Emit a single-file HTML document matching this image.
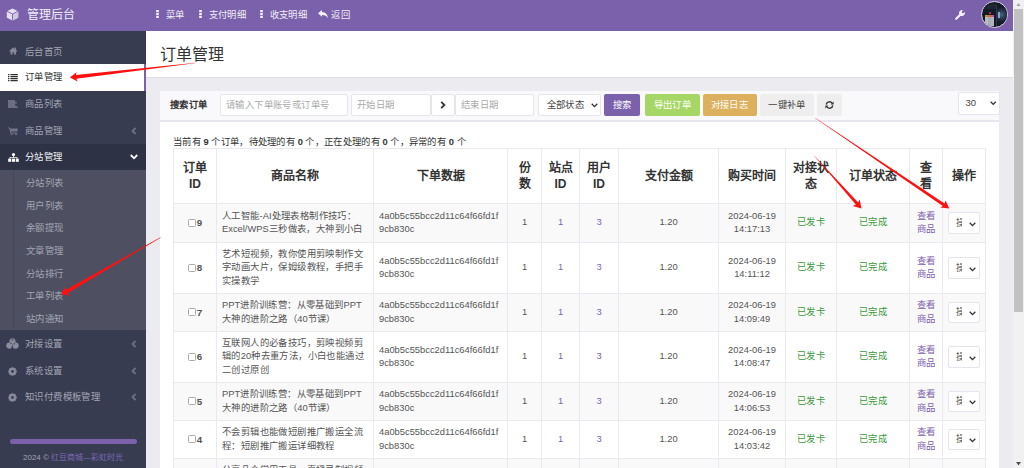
<!DOCTYPE html><html lang="zh-CN"><head><meta charset="utf-8"><style>
*{box-sizing:border-box;margin:0;padding:0}
html,body{width:1024px;height:468px;overflow:hidden;background:#ecebf0;font-family:"Liberation Sans",sans-serif;font-size:9.35px;color:#333}
i{font-style:normal;letter-spacing:.4px}
.abs{position:absolute}
#hdr{position:absolute;left:0;top:0;width:1013px;height:31px;background:#7b61ab;color:#fff}
#hdr .brand{position:absolute;left:27px;top:6.5px;font-size:12px;line-height:16px;color:#f1eef6}
#hdr .brand i{letter-spacing:0}
#hdr .nav{position:absolute;top:8.5px;line-height:13px;color:#f1eef6;white-space:nowrap}
#sb{position:absolute;left:0;top:31px;width:146px;height:437px;background:#373c50}
.mi{position:absolute;left:0;width:146px;height:27px;color:#a3a5b2;line-height:27px;white-space:nowrap}
.mi .t{position:absolute;left:25px;top:0}
.mi svg{position:absolute}
.mi.active{background:#fff;color:#333}
.sub{position:absolute;left:0;top:139px;width:146px;height:160px;background:#4e5061}
.sub .vl{position:absolute;left:13px;top:0;width:1px;height:160px;background:#444759}
.si{position:absolute;left:26px;color:#a3a5b2;line-height:13px}
#ct{position:absolute;left:146px;top:31px;width:867px;height:437px;background:#ecebf0}
#ch{position:absolute;left:0;top:0;width:867px;height:47px;background:#fff;border-bottom:1px solid #dfdbe8}
#ch h1{position:absolute;left:14px;top:14px;font-size:16px;font-weight:normal;line-height:20px;color:#333}
#ch h1 i{letter-spacing:0}
#panel{position:absolute;left:14px;top:60px;width:839px;height:400px;background:#fff}
#ph{position:absolute;left:0;top:0;width:839px;height:30.5px;background:#f9f8fb;border-bottom:2px solid #e8e6ee}
.inp{position:absolute;top:3px;height:22px;background:#fff;border:1px solid #e6e5ec;border-radius:2px;color:#aaa;line-height:20px;padding-left:5px;white-space:nowrap}
.btn{position:absolute;top:3px;height:22px;border-radius:2px;color:#fff;line-height:22px;text-align:center;white-space:nowrap}
#tbl{position:absolute;left:13px;top:57px;width:812px;border-collapse:collapse;table-layout:fixed}
#tbl td,#tbl th{border:1px solid #ebe9f0;text-align:center;vertical-align:middle}
#tbl th{font-size:12px;line-height:16.5px;font-weight:bold;color:#333;height:55px;padding:0 1px}
#tbl th i{letter-spacing:0}
#tbl td{font-size:9.35px;line-height:13.5px;color:#555;padding:0 5px}
#tbl td.l{text-align:left}
.info i{letter-spacing:.3px}
#tbl td.hx{word-break:break-all}
#tbl td.g{color:#3c9a3c}
#tbl td.p{color:#7b61ab}
#tbl tr.s td{background:#f9f9f9}
.cb{display:inline-block;width:8px;height:8px;border:1px solid #aaa;border-radius:1.5px;vertical-align:-1px;background:#fff;margin-right:1px}
#tbl td b{font-size:9.8px;position:relative;top:0.5px}
.ops{margin-left:-1px;display:inline-block;width:32px;height:21.5px;border:1px solid #e6e4ee;border-radius:2px;background:#fff;position:relative;vertical-align:middle}
</style></head><body>
<div id="hdr">
<svg class="abs" style="left:6px;top:8px" width="13" height="13" viewBox="0 0 13 13"><path d="M6.5 0.6L12.2 3.2V9.8L6.5 12.4L0.8 9.8V3.2Z" fill="#e4def0"/><path d="M6.5 6L12.2 3.2V9.8L6.5 12.4Z" fill="#cfc6e2"/><path d="M0.8 3.2L6.5 6L12.2 3.2M6.5 6V12.4" stroke="#7b61ab" stroke-width="0.9" fill="none"/></svg>
<div class="brand"><i>管理后台</i></div>
<svg class="abs" style="left:156px;top:10px" width="3" height="8" viewBox="0 0 3 8"><rect x="0.2" y="0" width="2.6" height="2.2" fill="#f4f0fa"/><rect x="0.2" y="2.9" width="2.6" height="2.2" fill="#f4f0fa"/><rect x="0.2" y="5.8" width="2.6" height="2.2" fill="#f4f0fa"/></svg><div class="nav" style="left:165.5px"><i>菜单</i></div>
<svg class="abs" style="left:198.8px;top:10px" width="3" height="8" viewBox="0 0 3 8"><rect x="0.2" y="0" width="2.6" height="2.2" fill="#f4f0fa"/><rect x="0.2" y="2.9" width="2.6" height="2.2" fill="#f4f0fa"/><rect x="0.2" y="5.8" width="2.6" height="2.2" fill="#f4f0fa"/></svg><div class="nav" style="left:208.7px"><i>支付明细</i></div>
<svg class="abs" style="left:259.9px;top:10px" width="3" height="8" viewBox="0 0 3 8"><rect x="0.2" y="0" width="2.6" height="2.2" fill="#f4f0fa"/><rect x="0.2" y="2.9" width="2.6" height="2.2" fill="#f4f0fa"/><rect x="0.2" y="5.8" width="2.6" height="2.2" fill="#f4f0fa"/></svg><div class="nav" style="left:269.7px"><i>收支明细</i></div>
<svg class="abs" style="left:318px;top:10px" width="10" height="8.5" viewBox="0 0 10 8.5"><path d="M0 3.3L4 0V2C7.5 2.2 9.6 4.2 9.8 8.3C8.8 6.1 7 5 4 5V6.8Z" fill="#f4f0fa"/></svg><div class="nav" style="left:331.2px"><i>返回</i></div>
<svg class="abs" style="left:955px;top:9px" width="11" height="11" viewBox="0 0 11 11"><path d="M1.2 9.8L5.5 5.5" stroke="#f4f0fa" stroke-width="2.2" stroke-linecap="round"/><path d="M8 1.2A3 3 0 1 0 9.8 3L8.3 4.2L6.9 4.1L6.8 2.7Z" fill="#f4f0fa"/></svg>
<div class="abs" style="left:981px;top:1px;width:27px;height:27px;border-radius:50%;border:1px solid #e2daf0;background:#131b27;overflow:hidden"><div class="abs" style="left:2px;top:2px;width:12px;height:5px;background:#1e2633"></div><div class="abs" style="left:3px;top:13.5px;width:2.6px;height:10px;background:#b8bcc4"></div><div class="abs" style="left:6px;top:13.5px;width:2.6px;height:10px;background:#a9adb6"></div><div class="abs" style="left:9px;top:14px;width:2.6px;height:9.5px;background:#b2b5bf"></div><div class="abs" style="left:3px;top:12.5px;width:2.6px;height:2px;background:#c88a3a"></div><div class="abs" style="left:6px;top:12.5px;width:2.6px;height:2px;background:#d0702e"></div><div class="abs" style="left:9px;top:13px;width:2.6px;height:2px;background:#b858b0"></div><div class="abs" style="left:6.5px;top:10px;width:2px;height:2px;background:#b83040"></div><div class="abs" style="left:13.5px;top:3px;width:1px;height:21px;background:#2c3848"></div><div class="abs" style="left:15px;top:5px;width:10px;height:17px;background:radial-gradient(circle at 45% 45%,#4a6480 0,#2a3a50 35%,#141c28 70%)"></div><div class="abs" style="left:16px;top:10px;width:2px;height:6px;background:#8aa4c0"></div></div>
</div>
<div id="sb">
<div class="mi" style="top:7.5px"><svg class="abs" style="left:8.5px;top:8.5px" width="8.6" height="7.6" viewBox="0 0 10 8" preserveAspectRatio="none"><path d="M5 0.3L0.3 4.3L1.2 5.1L1.8 4.6V7.8H4.2V5.6H5.8V7.8H8.2V4.6L8.8 5.1L9.7 4.3L8.2 3V0.6H7V2Z" fill="#868897"/></svg><span class="t"><i>后台首页</i></span></div>
<div class="mi active" style="top:33px"><svg class="abs" style="left:8px;top:10px" width="10" height="8" viewBox="0 0 10 8"><g fill="#333"><rect x="0" y="0" width="1.4" height="1.25"/><rect x="2.4" y="0" width="7.4" height="1.25"/><rect x="0" y="2" width="1.4" height="1.25"/><rect x="2.4" y="2" width="7.4" height="1.25"/><rect x="0" y="4" width="1.4" height="1.25"/><rect x="2.4" y="4" width="7.4" height="1.25"/><rect x="0" y="6" width="1.4" height="1.25"/><rect x="2.4" y="6" width="7.4" height="1.25"/></g></svg><span class="t"><i>订单管理</i></span><div class="abs" style="left:144px;top:0;width:2px;height:27px;background:#7b61ab"></div></div>
<div class="mi" style="top:60px"><svg class="abs" style="left:8px;top:8.7px" width="10" height="8.3" viewBox="0 0 10 8.3"><path d="M0 0H7V1.8H8.8V3.6H7V5.6H8.3V6.6H10V8.3H0Z" fill="#6c6e80"/></svg><span class="t"><i>商品列表</i></span></div>
<div class="mi" style="top:87px"><svg class="abs" style="left:8px;top:8.5px" width="10" height="8.5" viewBox="0 0 10 8.5"><path d="M0.2 0.2L2 0.9L2.4 1.5H9.7L9.5 4.6H3L3.2 5.6H9.2V6.6H2.5L1.3 1.6L0 1.1Z" fill="#73758a"/><rect x="2.6" y="6.6" width="2" height="1.6" fill="#73758a"/><rect x="7.1" y="6.6" width="2" height="1.6" fill="#73758a"/></svg><span class="t"><i>商品管理</i></span><svg class="abs" style="left:131px;top:8.7px" width="6" height="8" viewBox="0 0 6 8"><path d="M4.6 1L1.5 4L4.6 7" stroke="#6e7080" stroke-width="1.8" fill="none"/></svg></div>
<div class="mi" style="top:113px;background:#2d3245;color:#f4f4f6;height:26px"><svg class="abs" style="left:7.5px;top:9px" width="11" height="9" viewBox="0 0 11 9"><circle cx="5.5" cy="1.6" r="1.6" fill="#fff"/><path d="M5.5 2.8V4.6M1.8 6V4.6H9.2V6" stroke="#fff" stroke-width="0.8" fill="none"/><rect x="0.2" y="5.7" width="3" height="3.1" fill="#fff"/><rect x="4" y="5.7" width="3" height="3.1" fill="#fff"/><rect x="7.8" y="5.7" width="3" height="3.1" fill="#fff"/></svg><span class="t"><i>分站管理</i></span><svg class="abs" style="left:129.5px;top:10px" width="8" height="6" viewBox="0 0 8 6"><path d="M0.8 1L4 4.3L7.2 1" stroke="#fff" stroke-width="1.8" fill="none"/></svg></div>
<div class="sub"><div class="vl"></div>
<div class="si" style="top:7px"><i>分站列表</i></div>
<div class="si" style="top:29.7px"><i>用户列表</i></div>
<div class="si" style="top:52.3px"><i>余额提现</i></div>
<div class="si" style="top:75px"><i>文章管理</i></div>
<div class="si" style="top:97.7px"><i>分站排行</i></div>
<div class="si" style="top:120.3px"><i>工单列表</i></div>
<div class="si" style="top:143px"><i>站内通知</i></div>
</div>
<div class="mi" style="top:300px"><svg class="abs" style="left:6px;top:7px" width="13" height="11" viewBox="0 0 13 11"><circle cx="6.5" cy="3.2" r="3" fill="#8a8c9c"/><circle cx="3.4" cy="7.6" r="3.1" fill="#8a8c9c"/><circle cx="9.6" cy="7.6" r="3.1" fill="#8a8c9c"/><ellipse cx="6.5" cy="1.8" rx="1.2" ry="0.5" fill="#373c50"/><circle cx="5" cy="5.2" r="0.7" fill="#373c50"/><circle cx="8.2" cy="5.8" r="0.7" fill="#373c50"/><circle cx="6.3" cy="8.4" r="0.7" fill="#373c50"/></svg><span class="t"><i>对接设置</i></span><svg class="abs" style="left:131px;top:8.7px" width="6" height="8" viewBox="0 0 6 8"><path d="M4.6 1L1.5 4L4.6 7" stroke="#6e7080" stroke-width="1.8" fill="none"/></svg></div>
<div class="mi" style="top:327px"><svg class="abs" style="left:8.4px;top:9px" width="9" height="9" viewBox="0 0 9 9"><path d="M8.79 3.54 L8.79 5.46 L7.29 5.85 L7.43 5.52 L8.22 6.86 L6.86 8.22 L5.52 7.43 L5.85 7.29 L5.46 8.79 L3.54 8.79 L3.15 7.29 L3.48 7.43 L2.14 8.22 L0.78 6.86 L1.57 5.52 L1.71 5.85 L0.21 5.46 L0.21 3.54 L1.71 3.15 L1.57 3.48 L0.78 2.14 L2.14 0.78 L3.48 1.57 L3.15 1.71 L3.54 0.21 L5.46 0.21 L5.85 1.71 L5.52 1.57 L6.86 0.78 L8.22 2.14 L7.43 3.48 L7.29 3.15Z M4.5 3.1A1.4 1.4 0 1 0 4.5 5.9A1.4 1.4 0 1 0 4.5 3.1Z" fill="#8a8c9c" fill-rule="evenodd"/></svg><span class="t"><i>系统设置</i></span><svg class="abs" style="left:131px;top:8.7px" width="6" height="8" viewBox="0 0 6 8"><path d="M4.6 1L1.5 4L4.6 7" stroke="#6e7080" stroke-width="1.8" fill="none"/></svg></div>
<div class="mi" style="top:353px"><svg class="abs" style="left:8.4px;top:9px" width="9" height="9" viewBox="0 0 9 9"><path d="M8.79 3.54 L8.79 5.46 L7.29 5.85 L7.43 5.52 L8.22 6.86 L6.86 8.22 L5.52 7.43 L5.85 7.29 L5.46 8.79 L3.54 8.79 L3.15 7.29 L3.48 7.43 L2.14 8.22 L0.78 6.86 L1.57 5.52 L1.71 5.85 L0.21 5.46 L0.21 3.54 L1.71 3.15 L1.57 3.48 L0.78 2.14 L2.14 0.78 L3.48 1.57 L3.15 1.71 L3.54 0.21 L5.46 0.21 L5.85 1.71 L5.52 1.57 L6.86 0.78 L8.22 2.14 L7.43 3.48 L7.29 3.15Z M4.5 3.1A1.4 1.4 0 1 0 4.5 5.9A1.4 1.4 0 1 0 4.5 3.1Z" fill="#8a8c9c" fill-rule="evenodd"/></svg><span class="t"><i>知识付费模板管理</i></span><svg class="abs" style="left:131px;top:8.7px" width="6" height="8" viewBox="0 0 6 8"><path d="M4.6 1L1.5 4L4.6 7" stroke="#6e7080" stroke-width="1.8" fill="none"/></svg></div>
<div class="abs" style="left:10px;top:407.5px;width:127px;height:5px;border-radius:3px;background:#7b61ab"></div>
<div class="abs" style="left:23px;top:420px;color:#a3a5b2;line-height:13px;font-size:8px;white-space:nowrap">2024 © <span style="color:#7f68b8">红豆商城—彩虹时光</span></div>
</div>
<div id="ct"><div id="ch"><h1><i>订单管理</i></h1></div><div id="panel"><div id="ph">
<div class="abs" style="left:10px;top:8px;font-weight:bold;color:#333;line-height:13px"><i>搜索订单</i></div>
<div class="inp" style="left:60px;width:128px"><i>请输入下单账号或订单号</i></div>
<div class="inp" style="left:191px;width:80px"><i>开始日期</i></div>
<div class="inp" style="left:271px;width:24px"><svg class="abs" style="left:8px;top:6px" width="6" height="8" viewBox="0 0 6 8"><path d="M1.2 0.8L4.4 4L1.2 7.2" stroke="#333" stroke-width="1.8" fill="none"/></svg></div>
<div class="inp" style="left:295px;width:79px"><i>结束日期</i></div>
<div class="inp" style="left:377.7px;width:63px;color:#444;padding-left:8px"><i>全部状态</i><svg class="abs" style="left:52.5px;top:8px" width="7" height="5" viewBox="0 0 7 5"><path d="M0.7 0.8L3.5 3.6L6.3 0.8" stroke="#333" stroke-width="1.3" fill="none"/></svg></div>
<div class="btn" style="left:444px;width:36px;background:#7b61ab"><i>搜索</i></div>
<div class="btn" style="left:485px;width:55px;background:#a6d766"><i>导出订单</i></div>
<div class="btn" style="left:542.5px;width:54px;background:#dcb05c"><i>对接日志</i></div>
<div class="btn" style="left:600px;width:54px;background:#eeeeee;color:#444"><i>一键补单</i></div>
<div class="btn" style="left:657px;width:25px;background:#eeeeee"><svg class="abs" style="left:8px;top:7px" width="9" height="8" viewBox="0 0 9 8"><path d="M1.2 3.5A3.3 3.3 0 0 1 7.2 2.3M7.8 4.5A3.3 3.3 0 0 1 1.8 5.7" stroke="#333" stroke-width="1.4" fill="none"/><path d="M8.6 0.4V3.4H5.6Z M0.4 7.6V4.6H3.4Z" fill="#333"/></svg></div>
<div class="inp" style="left:797.5px;top:1.3px;width:42px;height:22.3px;color:#444;padding-left:7px;font-size:9.6px">30<svg class="abs" style="left:31.5px;top:8px" width="6.5" height="4.5" viewBox="0 0 6.5 4.5"><path d="M0.6 0.7L3.25 3.3L5.9 0.7" stroke="#3a3f50" stroke-width="1.3" fill="none"/></svg></div>
</div>
<div class="abs info" style="left:13px;top:44.5px;line-height:13px;white-space:nowrap"><i>当前有</i> <b>9</b> <i>个订单，待处理的有</i> <b>0</b> <i>个，正在处理的有</i> <b>0</b> <i>个，异常的有</i> <b>0</b> <i>个</i></div>
<table id="tbl"><colgroup><col style="width:43px"><col style="width:157px"><col style="width:134px"><col style="width:34px"><col style="width:38px"><col style="width:39px"><col style="width:100px"><col style="width:67px"><col style="width:51px"><col style="width:73px"><col style="width:33px"><col style="width:43px"></colgroup>
<tr><th><i>订单</i><br>ID</th><th><i>商品名称</i></th><th><i>下单数据</i></th><th><i>份</i><br><i>数</i></th><th><i>站点</i><br>ID</th><th><i>用户</i><br>ID</th><th><i>支付金额</i></th><th><i>购买时间</i></th><th><i>对接状</i><br><i>态</i></th><th><i>订单状态</i></th><th><i>查</i><br><i>看</i></th><th><i>操作</i></th></tr>
<tr class="s" style="height:39px"><td><span class="cb"></span><b>9</b></td><td class="l"><i>人工智能</i>-AI<i>处理表格制作技巧：</i>Excel/WPS<i>三秒做表，大神到小白</i></td><td class="l hx">4a0b5c55bcc2d11c64f66fd1f9cb830c</td><td>1</td><td class="p">1</td><td class="p">3</td><td>1.20</td><td>2024-06-19<br>14:17:13</td><td class="g"><i>已发卡</i></td><td class="g"><i>已完成</i></td><td class="p"><i>查看</i><br><i>商品</i></td><td><span class="ops"><span class="abs" style="left:7px;top:3.5px;width:6px;overflow:hidden;line-height:13px;color:#555;white-space:nowrap"><i>操作</i></span><svg class="abs" style="left:20.5px;top:8.3px" width="7" height="5" viewBox="0 0 7 5"><path d="M0.7 0.8L3.5 3.6L6.3 0.8" stroke="#333" stroke-width="1.3" fill="none"/></svg></span></td></tr>
<tr class="" style="height:51px"><td><span class="cb"></span><b>8</b></td><td class="l"><i>艺术短视频，教你使用剪映制作文字动画大片，保姆级教程，手把手实操教学</i></td><td class="l hx">4a0b5c55bcc2d11c64f66fd1f9cb830c</td><td>1</td><td class="p">1</td><td class="p">3</td><td>1.20</td><td>2024-06-19<br>14:11:12</td><td class="g"><i>已发卡</i></td><td class="g"><i>已完成</i></td><td class="p"><i>查看</i><br><i>商品</i></td><td><span class="ops"><span class="abs" style="left:7px;top:3.5px;width:6px;overflow:hidden;line-height:13px;color:#555;white-space:nowrap"><i>操作</i></span><svg class="abs" style="left:20.5px;top:8.3px" width="7" height="5" viewBox="0 0 7 5"><path d="M0.7 0.8L3.5 3.6L6.3 0.8" stroke="#333" stroke-width="1.3" fill="none"/></svg></span></td></tr>
<tr class="s" style="height:38px"><td><span class="cb"></span><b>7</b></td><td class="l">PPT<i>进阶训练营：从零基础到</i>PPT<i>大神的进阶之路（</i>40<i>节课）</i></td><td class="l hx">4a0b5c55bcc2d11c64f66fd1f9cb830c</td><td>1</td><td class="p">1</td><td class="p">3</td><td>1.20</td><td>2024-06-19<br>14:09:49</td><td class="g"><i>已发卡</i></td><td class="g"><i>已完成</i></td><td class="p"><i>查看</i><br><i>商品</i></td><td><span class="ops"><span class="abs" style="left:7px;top:3.5px;width:6px;overflow:hidden;line-height:13px;color:#555;white-space:nowrap"><i>操作</i></span><svg class="abs" style="left:20.5px;top:8.3px" width="7" height="5" viewBox="0 0 7 5"><path d="M0.7 0.8L3.5 3.6L6.3 0.8" stroke="#333" stroke-width="1.3" fill="none"/></svg></span></td></tr>
<tr class="" style="height:51px"><td><span class="cb"></span><b>6</b></td><td class="l"><i>互联网人的必备技巧，剪映视频剪辑的</i>20<i>种去重方法，小白也能通过二创过原创</i></td><td class="l hx">4a0b5c55bcc2d11c64f66fd1f9cb830c</td><td>1</td><td class="p">1</td><td class="p">3</td><td>1.20</td><td>2024-06-19<br>14:08:47</td><td class="g"><i>已发卡</i></td><td class="g"><i>已完成</i></td><td class="p"><i>查看</i><br><i>商品</i></td><td><span class="ops"><span class="abs" style="left:7px;top:3.5px;width:6px;overflow:hidden;line-height:13px;color:#555;white-space:nowrap"><i>操作</i></span><svg class="abs" style="left:20.5px;top:8.3px" width="7" height="5" viewBox="0 0 7 5"><path d="M0.7 0.8L3.5 3.6L6.3 0.8" stroke="#333" stroke-width="1.3" fill="none"/></svg></span></td></tr>
<tr class="s" style="height:38px"><td><span class="cb"></span><b>5</b></td><td class="l">PPT<i>进阶训练营：从零基础到</i>PPT<i>大神的进阶之路（</i>40<i>节课）</i></td><td class="l hx">4a0b5c55bcc2d11c64f66fd1f9cb830c</td><td>1</td><td class="p">1</td><td class="p">3</td><td>1.20</td><td>2024-06-19<br>14:06:53</td><td class="g"><i>已发卡</i></td><td class="g"><i>已完成</i></td><td class="p"><i>查看</i><br><i>商品</i></td><td><span class="ops"><span class="abs" style="left:7px;top:3.5px;width:6px;overflow:hidden;line-height:13px;color:#555;white-space:nowrap"><i>操作</i></span><svg class="abs" style="left:20.5px;top:8.3px" width="7" height="5" viewBox="0 0 7 5"><path d="M0.7 0.8L3.5 3.6L6.3 0.8" stroke="#333" stroke-width="1.3" fill="none"/></svg></span></td></tr>
<tr class="" style="height:38px"><td><span class="cb"></span><b>4</b></td><td class="l"><i>不会剪辑也能做短剧推广搬运全流程：短剧推广搬运详细教程</i></td><td class="l hx">4a0b5c55bcc2d11c64f66fd1f9cb830c</td><td>1</td><td class="p">1</td><td class="p">3</td><td>1.20</td><td>2024-06-19<br>14:03:42</td><td class="g"><i>已发卡</i></td><td class="g"><i>已完成</i></td><td class="p"><i>查看</i><br><i>商品</i></td><td><span class="ops"><span class="abs" style="left:7px;top:3.5px;width:6px;overflow:hidden;line-height:13px;color:#555;white-space:nowrap"><i>操作</i></span><svg class="abs" style="left:20.5px;top:8.3px" width="7" height="5" viewBox="0 0 7 5"><path d="M0.7 0.8L3.5 3.6L6.3 0.8" stroke="#333" stroke-width="1.3" fill="none"/></svg></span></td></tr>
<tr class="s" style="height:51px"><td><span class="cb"></span><b>3</b></td><td class="l"><i>分享几个常用工具，直播录制视频转换工具，剪辑素材网站大全合集推荐</i></td><td class="l hx">4a0b5c55bcc2d11c64f66fd1f9cb830c</td><td>1</td><td class="p">1</td><td class="p">3</td><td>1.20</td><td>2024-06-19<br>14:01:20</td><td class="g"><i>已发卡</i></td><td class="g"><i>已完成</i></td><td class="p"><i>查看</i><br><i>商品</i></td><td><span class="ops"><span class="abs" style="left:7px;top:3.5px;width:6px;overflow:hidden;line-height:13px;color:#555;white-space:nowrap"><i>操作</i></span><svg class="abs" style="left:20.5px;top:8.3px" width="7" height="5" viewBox="0 0 7 5"><path d="M0.7 0.8L3.5 3.6L6.3 0.8" stroke="#333" stroke-width="1.3" fill="none"/></svg></span></td></tr>
</table>
</div></div>
<div class="abs" style="left:1013px;top:0;width:11px;height:468px;background:#f1f1f1"></div>
<svg class="abs" style="left:1016px;top:2.5px" width="5" height="3.5" viewBox="0 0 5 3.5"><path d="M0 3.5L2.5 0L5 3.5Z" fill="#a3a3a3"/></svg>
<div class="abs" style="left:1014px;top:9px;width:9px;height:303px;background:#c1c1c1"></div>
<svg class="abs" style="left:1016px;top:462px" width="5" height="3.5" viewBox="0 0 5 3.5"><path d="M0 0L2.5 3.5L5 0Z" fill="#505050"/></svg>
<svg class="abs" style="left:0;top:0" width="1024" height="468" viewBox="0 0 1024 468"><path d="M195.98 62.65 L75.86 74.89 L76.60 72.30 L69.90 77.50 L77.60 81.50 L76.30 78.67 L196.02 62.95Z" fill="#ff1010"/><path d="M160.43 237.37 L65.51 289.88 L64.90 286.90 L61.10 294.60 L70.00 295.60 L67.40 293.17 L160.57 237.63Z" fill="#ff1010"/><path d="M815.22 118.32 L942.81 206.05 L940.30 207.60 L949.30 208.50 L945.60 200.50 L944.59 203.40 L815.38 118.08Z" fill="#ff1010"/><path d="M813.89 155.60 L855.78 204.61 L852.80 206.00 L861.40 208.50 L859.80 199.60 L858.16 202.48 L814.11 155.40Z" fill="#ff1010"/></svg>
</body></html>
